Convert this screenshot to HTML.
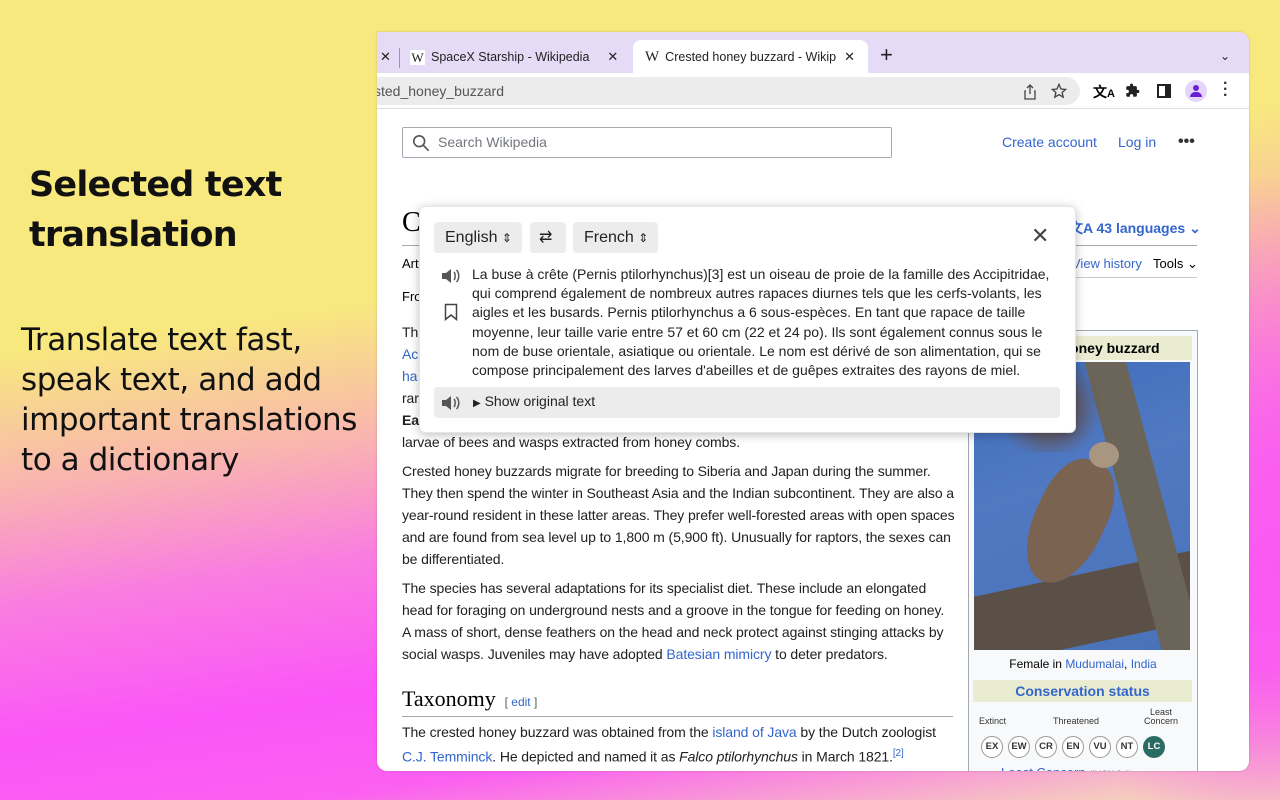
<!DOCTYPE html>
<html><head><meta charset="utf-8"><style>
*{margin:0;padding:0;box-sizing:border-box}
body{width:1280px;height:800px;overflow:hidden;position:relative;font-family:"Liberation Sans",Arial,sans-serif;
background:
radial-gradient(ellipse 220px 420px at 1290px 520px, rgba(250,90,240,0.95), rgba(250,90,240,0) 100%),
linear-gradient(172deg,#f8e97e 0%,#f8e97e 36%,#f9b4b0 50%,#f97de0 62%,#fb55f7 76%,#fb60f0 86%,#f4e4b4 100%);}
.h1{position:absolute;left:29px;top:160px;font:bold 35px/50px "DejaVu Sans","Liberation Sans",sans-serif;color:#111;letter-spacing:-0.8px}
.sub{position:absolute;left:21px;top:320px;font:31px/40px "DejaVu Sans","Liberation Sans",sans-serif;color:#111;letter-spacing:-0.45px}
.win{position:absolute;left:377px;top:32px;width:872px;height:739px;border-radius:0 10px 10px 10px;overflow:hidden;background:#fff;box-shadow:0 0 2px rgba(0,0,0,.2)}
.tabs{position:absolute;left:0;top:0;width:872px;height:41px;background:#e6dbf6}
.tab{position:absolute;top:8px;height:33px;font-size:12.5px;color:#222;line-height:33px}
.act{left:256px;width:235px;background:#fff;border-radius:8px 8px 0 0;top:8px}
.wl{font-family:"Liberation Serif",serif;font-size:15px;margin-right:6px}
.tool{position:absolute;top:41px;left:0;width:872px;height:36px;background:#fff;border-bottom:1px solid #ddd}
.omni{position:absolute;left:-20px;top:4px;width:723px;height:28px;background:#ececec;border-radius:14px;font-size:14px;color:#555;line-height:28px;padding-left:17px}
.blue{color:#3366cc}
.p{position:absolute;left:25px;font-size:14px;line-height:22px;color:#202122;width:553px;letter-spacing:-0.1px}
.pop{position:absolute;left:42px;top:174px;width:657px;height:227px;background:#fff;border-radius:6px;box-shadow:0 2px 10px rgba(0,0,0,.25);border:1px solid #e5e5e5}
.btn{position:absolute;top:15px;height:31px;background:#ececec;border-radius:4px;font-size:16px;line-height:31px;color:#222;padding-left:11px}
.ib{position:absolute;left:591px;top:298px;width:230px;height:460px;border:1px solid #a2a9b1;background:#f8f9fa}
.cb{display:inline-block;width:22px;height:22px;border:1px solid #999;border-radius:50%;font-size:9.5px;font-weight:bold;line-height:20px;text-align:center;margin-right:5px;background:#fff;color:#333}
</style></head><body>
<div class="h1">Selected text<br>translation</div>
<div class="sub">Translate text fast,<br>speak text, and add<br>important translations<br>to a dictionary</div>

<div class="win">
 <div class="tabs">
  <div class="tab" style="left:3px;font-size:13px">✕</div>
  <div style="position:absolute;left:22px;top:16px;width:1px;height:20px;background:#999"></div>
  <div class="tab" style="left:33px"><span style="display:inline-block;width:15px;height:15px;background:#fff;vertical-align:middle;margin-right:6px;font:13px/15px 'Liberation Serif',serif;text-align:center">W</span>SpaceX Starship - Wikipedia<span style="margin-left:18px;font-size:13px">✕</span></div>
  <div class="tab act"><span style="margin-left:12px" class="wl">W</span>Crested honey buzzard - Wikip<span style="margin-left:8px;font-size:13px">✕</span></div>
  <div class="tab" style="left:503px;font-size:22px;top:6px">+</div>
  <div class="tab" style="left:843px;font-size:12px">⌄</div>
 </div>
 <div class="tool">
  <div class="omni">sted_honey_buzzard
   <svg style="position:absolute;left:666px;top:7px" width="14" height="16" viewBox="0 0 14 16" fill="none" stroke="#444" stroke-width="1.3"><path d="M7 1v9M4 4l3-3 3 3M3 7H2v8h10V7h-1"/></svg>
   <svg style="position:absolute;left:694px;top:6px" width="16" height="16" viewBox="0 0 24 24" fill="none" stroke="#444" stroke-width="2"><path d="M12 2l3 7 7 .6-5.3 4.6 1.6 7L12 17.5 5.7 21.2l1.6-7L2 9.6 9 9z"/></svg>
  </div>
  <div style="position:absolute;left:716px;top:9px;font-size:14px;font-weight:bold">文<span style="font-size:11px">A</span></div>
  <svg style="position:absolute;left:748px;top:10px" width="15" height="15" viewBox="0 0 24 24" fill="#222"><path d="M20.5 11H19V7c0-1.1-.9-2-2-2h-4V3.5a2.5 2.5 0 0 0-5 0V5H4c-1.1 0-2 .9-2 2v3.8h1.5a2.7 2.7 0 0 1 0 5.4H2V20c0 1.1.9 2 2 2h3.8v-1.5a2.7 2.7 0 0 1 5.4 0V22H17c1.1 0 2-.9 2-2v-4h1.5a2.5 2.5 0 0 0 0-5z"/></svg>
  <div style="position:absolute;left:780px;top:11px;width:14px;height:14px;border:2px solid #222;border-right-width:6px"></div>
  <div style="position:absolute;left:808px;top:7px;width:22px;height:22px;border-radius:50%;background:#e3d5fb"><div style="position:absolute;left:8px;top:5px;width:6px;height:6px;border-radius:50%;background:#6a1fd0"></div><div style="position:absolute;left:5px;top:12px;width:12px;height:5px;border-radius:5px 5px 0 0;background:#6a1fd0"></div></div>
  <div style="position:absolute;left:846px;top:8px;font-size:16px;font-weight:bold;line-height:6px;color:#333">·<br>·<br>·</div>
 </div>

 <div style="position:absolute;left:25px;top:95px;width:490px;height:31px;border:1px solid #a2a9b1;border-radius:2px;font-size:14px;color:#72777d;line-height:29px;padding-left:35px">Search Wikipedia
  <svg style="position:absolute;left:9px;top:6px" width="18" height="18" viewBox="0 0 20 20" fill="none" stroke="#555" stroke-width="1.8"><circle cx="8" cy="8" r="6"/><path d="M12.5 12.5l6 6"/></svg></div>
 <div class="blue" style="position:absolute;left:625px;top:102px;font-size:14px">Create account</div>
 <div class="blue" style="position:absolute;left:741px;top:102px;font-size:14px">Log in</div>
 <div style="position:absolute;left:801px;top:101px;font-size:16px;font-weight:bold;color:#333">•••</div>

 <div style="position:absolute;left:25px;top:175px;font:28px 'Liberation Serif',serif">C</div>
 <div style="position:absolute;left:25px;top:213px;width:550px;height:1px;background:#a2a9b1"></div>
 <div style="position:absolute;left:25px;top:224px;font-size:13px">Art</div>
 <div style="position:absolute;left:25px;top:257px;font-size:13px">Fro</div>
 <div class="blue" style="position:absolute;left:692px;top:186px;font-size:14px;font-weight:bold">文A 43 languages ⌄</div>
 <div style="position:absolute;left:692px;top:213px;width:128px;height:1px;background:#a2a9b1"></div>
 <div class="blue" style="position:absolute;left:695px;top:224px;font-size:13px">View history</div>
 <div style="position:absolute;left:776px;top:224px;font-size:13px">Tools ⌄</div>
 <div style="position:absolute;left:692px;top:245px;width:128px;height:1px;background:#c8ccd1"></div>
 <div class="p" style="top:289px">Th<br><span class="blue">Ac</span><br><span class="blue">ha</span><br>rar<br><b>Ea</b></div>
 <div class="p" style="top:399px">larvae of bees and wasps extracted from honey combs.</div>
 <div class="p" style="top:428px">Crested honey buzzards migrate for breeding to Siberia and Japan during the summer. They then spend the winter in Southeast Asia and the Indian subcontinent. They are also a year-round resident in these latter areas. They prefer well-forested areas with open spaces and are found from sea level up to 1,800 m (5,900 ft). Unusually for raptors, the sexes can be differentiated.</div>
 <div class="p" style="top:545px">The species has several adaptations for its specialist diet. These include an elongated head for foraging on underground nests and a groove in the tongue for feeding on honey. A mass of short, dense feathers on the head and neck protect against stinging attacks by social wasps. Juveniles may have adopted <span class="blue">Batesian mimicry</span> to deter predators.</div>
 <div style="position:absolute;left:25px;top:654px;font:22px 'Liberation Serif',serif;color:#000">Taxonomy <span class="blue" style="font:12px 'Liberation Sans';color:#54595d">&nbsp;[ <span class="blue">edit</span> ]</span></div>
 <div style="position:absolute;left:25px;top:684px;width:551px;height:1px;background:#a2a9b1"></div>
 <div class="p" style="top:689px">The crested honey buzzard was obtained from the <span class="blue">island of Java</span> by the Dutch zoologist <span class="blue">C.J. Temminck</span>. He depicted and named it as <i>Falco ptilorhynchus</i> in March 1821.<sup class="blue" style="font-size:10px">[2]</sup></div>

 <div class="ib">
  <div style="position:absolute;left:4px;top:5px;width:219px;height:24px;background:#eaecd2;font-weight:bold;font-size:14px;text-align:center;line-height:24px">Crested honey buzzard</div>
  <div style="position:absolute;left:5px;top:31px;width:216px;height:288px;background:linear-gradient(160deg,#3f6bb8 0%,#5079c2 40%,#4a72b8 100%);overflow:hidden">
   <div style="position:absolute;left:-20px;top:210px;width:280px;height:70px;background:#5a5048;transform:rotate(-12deg)"></div>
   <div style="position:absolute;left:150px;top:-10px;width:40px;height:310px;background:#6b6459;transform:rotate(-15deg)"></div>
   <div style="position:absolute;left:60px;top:95px;width:70px;height:130px;border-radius:40% 40% 50% 50%;background:#7a6350;transform:rotate(25deg)"></div>
   <div style="position:absolute;left:115px;top:80px;width:30px;height:26px;border-radius:50%;background:#a89680"></div>
   <div style="position:absolute;left:0;top:0;width:150px;height:90px;background:radial-gradient(circle,#6b4a38 15%,transparent 60%)"></div>
  </div>
  <div style="position:absolute;left:0;top:326px;width:228px;text-align:center;font-size:12px">Female in <span class="blue">Mudumalai</span>, <span class="blue">India</span></div>
  <div class="blue" style="position:absolute;left:4px;top:349px;width:219px;height:22px;background:#eaecd2;font-weight:bold;font-size:14px;text-align:center;line-height:22px">Conservation status</div>
  <div style="position:absolute;left:10px;top:385px;font-size:9px;color:#333">Extinct</div>
  <div style="position:absolute;left:84px;top:385px;font-size:9px;color:#333">Threatened</div>
  <div style="position:absolute;left:175px;top:377px;font-size:9px;color:#333;text-align:center;line-height:9px">Least<br>Concern</div>
  <div style="position:absolute;left:12px;top:405px;white-space:nowrap"><span class="cb">EX</span><span class="cb">EW</span><span class="cb">CR</span><span class="cb">EN</span><span class="cb">VU</span><span class="cb">NT</span><span class="cb" style="background:#2a6b63;color:#fff;border-color:#2a6b63">LC</span></div>
  <div class="blue" style="position:absolute;left:32px;top:434px;font-size:13px">Least Concern <span style="font-size:9px">(IUCN 3.1)</span></div>
 </div>

 <div class="pop">
  <div class="btn" style="left:14px;width:88px">English <span style="font-size:12px">⇕</span></div>
  <div class="btn" style="left:110px;width:36px;padding-left:9px;font-size:16px">⇄</div>
  <div class="btn" style="left:153px;width:85px">French <span style="font-size:12px">⇕</span></div>
  <div style="position:absolute;left:611px;top:16px;font-size:22px;color:#444">✕</div>
  <svg style="position:absolute;left:20px;top:60px" width="20" height="18" viewBox="0 0 20 18"><path d="M2 6h4l5-4v14l-5-4H2z" fill="#555"/><path d="M14 5c1.5 1.5 1.5 6.5 0 8M16.5 3c3 3 3 9 0 12" stroke="#555" stroke-width="1.5" fill="none"/></svg>
  <svg style="position:absolute;left:24px;top:96px" width="14" height="18" viewBox="0 0 14 18"><path d="M1.5 1.5h11v15L7 12l-5.5 4.5z" fill="none" stroke="#444" stroke-width="1.5"/></svg>
  <div style="position:absolute;left:52px;top:58px;width:592px;font-size:14px;line-height:19.2px;color:#222">La buse à crête (Pernis ptilorhynchus)[3] est un oiseau de proie de la famille des Accipitridae, qui comprend également de nombreux autres rapaces diurnes tels que les cerfs-volants, les aigles et les busards. Pernis ptilorhynchus a 6 sous-espèces. En tant que rapace de taille moyenne, leur taille varie entre 57 et 60 cm (22 et 24 po). Ils sont également connus sous le nom de buse orientale, asiatique ou orientale. Le nom est dérivé de son alimentation, qui se compose principalement des larves d'abeilles et de guêpes extraites des rayons de miel.</div>
  <div style="position:absolute;left:14px;top:180px;width:626px;height:31px;background:#ececec;border-radius:4px">
   <svg style="position:absolute;left:6px;top:7px" width="20" height="18" viewBox="0 0 20 18"><path d="M2 6h4l5-4v14l-5-4H2z" fill="#555"/><path d="M14 5c1.5 1.5 1.5 6.5 0 8M16.5 3c3 3 3 9 0 12" stroke="#555" stroke-width="1.5" fill="none"/></svg>
   <div style="position:absolute;left:39px;top:6px;font-size:14px;color:#222"><span style="font-size:10px">▶</span> Show original text</div>
  </div>
 </div>
</div>
</body></html>
